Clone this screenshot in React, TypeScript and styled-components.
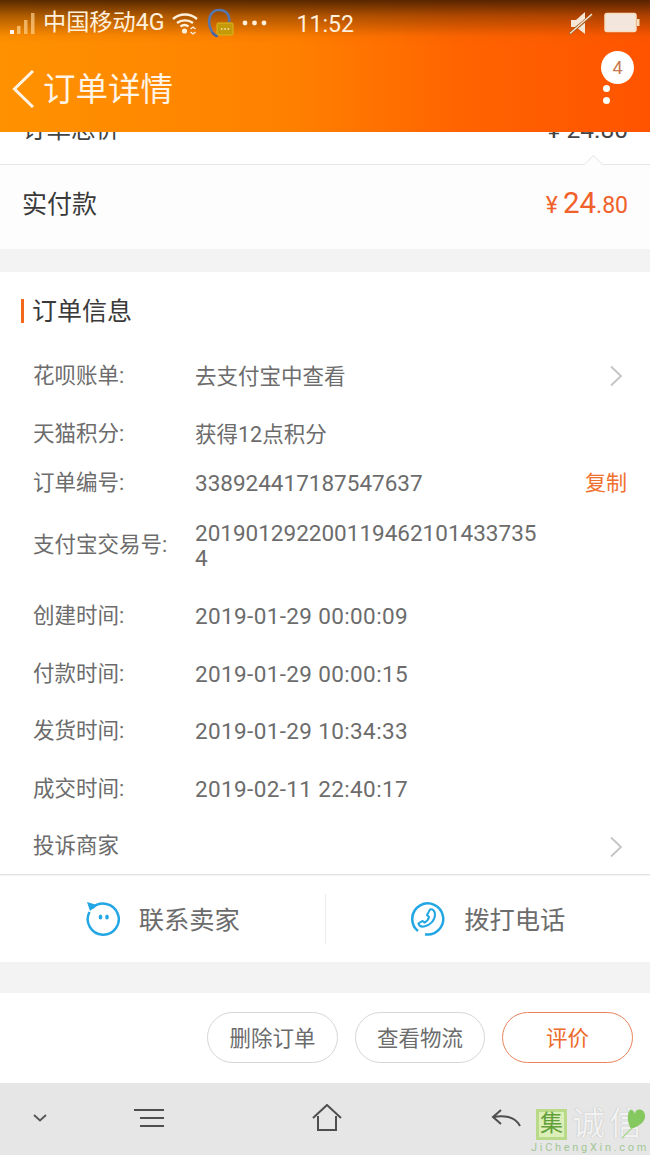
import React from "react";
import styled, { createGlobalStyle } from "styled-components";

const Global = createGlobalStyle`
  html, body { margin: 0; padding: 0; background: #f3f3f3; }
  body { font-family: Roboto, "Noto Sans CJK SC", sans-serif; }
  * { box-sizing: border-box; }
`;

const Page = styled.div`
  width: 650px;
  height: 1155px;
  position: relative;
  overflow: hidden;
  display: flex;
  flex-direction: column;
  background: #f3f3f3;
`;

const Header = styled.header`
  height: 132px;
  flex: none;
  color: #fff2e0;
  background:
    linear-gradient(180deg, rgba(70, 30, 0, 0.9) 0, rgba(110, 50, 0, 0.55) 16px, rgba(200, 90, 0, 0.12) 36px, rgba(255, 120, 0, 0) 44px),
    linear-gradient(90deg, #ff9200 0, #ff8000 45%, #ff6400 70%, #ff5300 100%);
  display: flex;
  flex-direction: column;
`;

const StatusBar = styled.div`
  height: 44px;
  display: flex;
  align-items: center;
  padding: 2px 10px 0 10px;
  font-size: 23.2px;
  line-height: 26px;
  color: #fff0dc;
`;

const Carrier = styled.span`
  margin-left: 5px;
  position: relative;
  top: -1px;
`;

const Clock = styled.span`
  margin-left: 29px;
  font-size: 23px;
  position: relative;
  top: 2px;
`;

const Spacer = styled.div`
  flex: 1;
`;

const NavBar = styled.div`
  height: 88px;
  display: flex;
  align-items: center;
  padding: 1px 17px 0 12px;
  position: relative;
  color: #fff4e6;
`;

const Title = styled.h1`
  margin: 3px 0 0 9px;
  font-size: 32.5px;
  line-height: 40px;
  font-weight: 400;
`;

const Badge = styled.span`
  position: absolute;
  top: 7px;
  right: 16px;
  width: 33px;
  height: 33px;
  border-radius: 50%;
  background: #fff;
  color: #c97a50;
  font-size: 18px;
  display: flex;
  align-items: center;
  justify-content: center;
`;

const Dots = styled.div`
  position: absolute;
  top: 41px;
  right: 40px;
  display: flex;
  flex-direction: column;
  gap: 5px;
`;

const Dot = styled.span`
  width: 7px;
  height: 7px;
  border-radius: 50%;
  background: #fff;
`;

const TotalRow = styled.div`
  height: 32px;
  flex: none;
  background: #fff;
  overflow: hidden;
  display: flex;
  justify-content: space-between;
  padding: 0 22px;
  font-size: 24.5px;
  line-height: 24px;
  color: #444;
`;

const ClippedText = styled.span`
  margin-top: -14px;
`;

const PaidRow = styled.div`
  height: 85px;
  flex: none;
  position: relative;
  background: #fdfdfd;
  border-top: 1px solid #e6e6e6;
  display: flex;
  align-items: center;
  justify-content: space-between;
  padding: 0 22px 5px;
`;

const Caret = styled.span`
  position: absolute;
  top: -9px;
  right: 48px;
  width: 17px;
  height: 17px;
  transform: rotate(45deg) scale(0.8, 0.8);
  background: #fdfdfd;
  border-left: 1px solid #e4e4e4;
  border-top: 1px solid #e4e4e4;
`;

const PaidLabel = styled.span`
  font-size: 25px;
  line-height: 28px;
  color: #3a3a3a;
`;

const Price = styled.span`
  color: #f0602a;
  font-size: 23px;
  line-height: 34px;
  display: flex;
  align-items: baseline;
`;

const PriceBig = styled.span`
  font-size: 29.5px;
  margin-left: 5px;
`;

const Card = styled.section`
  margin-top: 23px;
  height: 603px;
  flex: none;
  background: #fff;
  border-bottom: 1px solid #e2e2e2;
`;

const CardTitle = styled.h2`
  margin: 0 0 0 21px;
  height: 78px;
  display: flex;
  align-items: center;
  font-size: 25px;
  line-height: 28px;
  font-weight: 400;
  color: #3a3a3a;

  &::before {
    content: "";
    width: 3px;
    height: 24px;
    background: #f4681e;
    margin-right: 8px;
  }
`;

const CardTitleText = styled.span`
  padding-top: 2px;
`;

const RowList = styled.div`
  margin-top: -3px;
`;

const InfoRow = styled.div<{ $h: number }>`
  height: ${(p) => p.$h}px;
  display: flex;
  align-items: center;
  padding-left: 33px;
  font-size: 21.5px;
  line-height: 25px;
  color: #6c6c6c;
  position: relative;
`;

const Label = styled.span`
  width: 162px;
  flex: none;
  white-space: nowrap;
  padding-bottom: 2px;
`;

const Value = styled.span<{ $numeric?: boolean; $spacing?: number }>`
  width: 344px;
  font-size: ${(p) => (p.$numeric ? "22.5px" : "21.5px")};
  letter-spacing: ${(p) => p.$spacing ?? 0}px;
  line-height: 25px;
  word-break: break-all;
  color: #6c6c6c;
`;

const Copy = styled.span`
  position: absolute;
  right: 23px;
  color: #f0702e;
  font-size: 21px;
`;

const Chevron = styled.svg`
  position: absolute;
  right: 27px;
  width: 14px;
  height: 22px;
`;

const Contact = styled.div`
  margin-top: 1px;
  height: 86px;
  flex: none;
  background: #fff;
  display: flex;
  align-items: center;
`;

const ContactItem = styled.div<{ $divider?: boolean }>`
  flex: 1;
  height: 50px;
  display: flex;
  align-items: center;
  justify-content: center;
  gap: 19px;
  padding-left: 1px;
  font-size: 25.3px;
  line-height: 28px;
  color: #6c6c6c;
  border-left: ${(p) => (p.$divider ? "1px solid #ececec" : "0")};
`;

const ContactLabel = styled.span`
  padding-top: 4px;
`;

const Actions = styled.div`
  margin-top: 31px;
  height: 90px;
  flex: none;
  background: #fff;
  display: flex;
  align-items: center;
  justify-content: flex-end;
  gap: 17px;
  padding: 0 17px 2px 0;
`;

const ActionButton = styled.button<{ $primary?: boolean; $w: number }>`
  width: ${(p) => p.$w}px;
  height: 51px;
  border-radius: 26px;
  background: #fff;
  font-family: inherit;
  font-size: 21.5px;
  line-height: 25px;
  padding: 3px 0 0;
  color: ${(p) => (p.$primary ? "#ee6a28" : "#6c6c6c")};
  border: 1px solid ${(p) => (p.$primary ? "#e8845a" : "#d6d6d6")};
`;

const BottomNav = styled.nav`
  flex: 1;
  background: #e6e6e6;
  position: relative;
  display: flex;
  align-items: center;
  padding-bottom: 2px;
`;

const NavSlot = styled.div<{ $w: number }>`
  width: ${(p) => p.$w}px;
  flex: none;
  display: flex;
  justify-content: center;
`;

const Watermark = styled.div`
  position: absolute;
  right: 0;
  bottom: 0;
  width: 120px;
  height: 47px;
  padding-left: 6px;
`;

const MarkRow = styled.div`
  display: flex;
  align-items: center;
  height: 32px;
`;

const MarkBox = styled.span`
  width: 31px;
  height: 31px;
  margin-right: 5px;
  flex: none;
  background: #dcefb8;
  border: 3px solid #b9da88;
  color: #63a03c;
  font-size: 23px;
  line-height: 24px;
  text-align: center;
`;

const MarkText = styled.span`
  display: block;
  height: 32px;
  font-size: 33px;
  line-height: 32px;
  letter-spacing: 4px;
  color: #f2f2f2;
  text-shadow: 0 0 1px #a8a8a8;
  white-space: nowrap;
`;

const MarkUrl = styled.div`
  font-size: 11px;
  line-height: 12px;
  letter-spacing: 2.7px;
  color: #a3c796;
  margin: 2px 0 0 -5px;
  white-space: nowrap;
`;

const Heart = styled.svg`
  position: absolute;
  right: 0;
  top: 0;
  width: 34px;
  height: 34px;
`;

const RightChevron = () => (
  <Chevron viewBox="0 0 14 22" fill="none" stroke="#c4c4c4" strokeWidth="1.8">
    <path d="M2 1.5 12 11 2 20.5" />
  </Chevron>
);

const rows: { h: number; label: string; value?: string; numeric?: boolean; spacing?: number; copy?: boolean; chev?: boolean }[] = [
  { h: 58, label: "花呗账单:", value: "去支付宝中查看", chev: true },
  { h: 58, label: "天猫积分:", value: "获得12点积分" },
  { h: 41, label: "订单编号:", value: "338924417187547637", numeric: true, copy: true },
  { h: 83, label: "支付宝交易号:", value: "2019012922001194621014337354", numeric: true },
  { h: 58, label: "创建时间:", value: "2019-01-29 00:00:09", numeric: true, spacing: 0.37 },
  { h: 58, label: "付款时间:", value: "2019-01-29 00:00:15", numeric: true, spacing: 0.37 },
  { h: 57, label: "发货时间:", value: "2019-01-29 10:34:33", numeric: true, spacing: 0.37 },
  { h: 58, label: "成交时间:", value: "2019-02-11 22:40:17", numeric: true, spacing: 0.37 },
  { h: 57, label: "投诉商家", chev: true },
];

export default function App() {
  return (
    <Page>
      <Global />
      <Header>
        <StatusBar>
          <svg width="28" height="24" viewBox="0 0 28 24">
            <rect x="0" y="19" width="4" height="4" fill="#fff6e8" />
            <rect x="7" y="15" width="3.5" height="8" fill="#ffd08a" opacity="0.75" />
            <rect x="14" y="9" width="3.5" height="14" fill="#ffd08a" opacity="0.7" />
            <rect x="21" y="2" width="3.5" height="21" fill="#ffd08a" opacity="0.7" />
          </svg>
          <Carrier>中国移动4G</Carrier>
          <svg width="28" height="24" viewBox="0 0 28 24" fill="none" stroke="#fff0dc" strokeWidth="2.4" style={{ marginLeft: 6 }}>
            <path d="M2 8c7-6 17-6 24 0M6 12c4.500-3.500 11.500-3.500 16 0M9.500 15.500c2.500-1.800 5.500-1.800 8 0" />
            <circle cx="13.500" cy="20" r="2.600" fill="#fff0dc" stroke="none" />
            <path d="M19.500 18l2.500-2 2.500 2M19.500 21l2.500 2 2.500-2" strokeWidth="1.300" />
          </svg>
          <svg width="28" height="32" viewBox="0 0 28 32" fill="none" style={{ marginLeft: 8 }}>
            <path d="M5 25C-1 14 3 3 12 3s11 7 10 12" stroke="#5577b0" strokeWidth="2.600" />
            <path d="M5 25c2 3 4 4 6 4" stroke="#4466a8" strokeWidth="2.600" />
            <rect x="10" y="16" width="16" height="12" rx="1" fill="#c49a08" stroke="#d8b820" />
            <path d="M14 22h1.500M17.300 22h1.500M20.600 22h1.500" stroke="#fff0c0" strokeWidth="1.500" />
          </svg>
          <svg width="26" height="8" viewBox="0 0 26 8" fill="#fff0dc" style={{ marginLeft: 7 }}>
            <circle cx="3" cy="4" r="2.400" />
            <circle cx="12.500" cy="4" r="2.400" />
            <circle cx="22" cy="4" r="2.400" />
          </svg>
          <Clock>11:52</Clock>
          <Spacer />
          <svg width="24" height="24" viewBox="0 0 24 24" style={{ marginRight: 11 }}>
            <path d="M2 9h5l9-8v22l-9-7H2z" fill="#f6e6d6" />
            <path d="M0 23 23 4" stroke="#a85a18" strokeWidth="3" />
            <path d="M1 22.500 23 3" stroke="#f6e6d6" strokeWidth="1.300" />
          </svg>
          <svg width="36" height="22" viewBox="0 0 36 22">
            <rect x="1" y="1.500" width="31" height="18" rx="2" fill="#f3e6dc" stroke="#f8ddc0" strokeWidth="1.500" />
            <rect x="33" y="7" width="2.500" height="7" fill="#f8ddc0" />
          </svg>
        </StatusBar>
        <NavBar>
          <svg width="22" height="38" viewBox="0 0 22 38" fill="none" stroke="#fff4e6" strokeWidth="3">
            <path d="M21 1 2.500 19 21 37" />
          </svg>
          <Title>订单详情</Title>
          <Badge>4</Badge>
          <Dots>
            <Dot />
            <Dot />
          </Dots>
        </NavBar>
      </Header>
      <TotalRow>
        <ClippedText>订单总价</ClippedText>
        <ClippedText>¥ 24.80</ClippedText>
      </TotalRow>
      <PaidRow>
        <Caret />
        <PaidLabel>实付款</PaidLabel>
        <Price>
          ¥<PriceBig>24</PriceBig>.80
        </Price>
      </PaidRow>
      <Card>
        <CardTitle>
          <CardTitleText>订单信息</CardTitleText>
        </CardTitle>
        <RowList>
          {rows.map((r) => (
            <InfoRow key={r.label} $h={r.h}>
              <Label>{r.label}</Label>
              {r.value && (
                <Value $numeric={r.numeric} $spacing={r.spacing}>
                  {r.value}
                </Value>
              )}
              {r.copy && <Copy>复制</Copy>}
              {r.chev && <RightChevron />}
            </InfoRow>
          ))}
        </RowList>
      </Card>
      <Contact>
        <ContactItem>
          <svg width="34" height="34" viewBox="0 0 34 34" fill="none">
            <path d="M6 6.500A15.500 15.500 0 1 1 3.500 10" stroke="#22a6e4" strokeWidth="2.500" />
            <path d="M1 0l10 3-7 6z" fill="#22a6e4" />
            <ellipse cx="14.500" cy="15" rx="1.800" ry="2.600" fill="#22a6e4" />
            <ellipse cx="21" cy="15" rx="1.800" ry="2.600" fill="#22a6e4" />
          </svg>
          <ContactLabel>联系卖家</ContactLabel>
        </ContactItem>
        <ContactItem $divider>
          <svg width="34" height="34" viewBox="0 0 34 34" fill="none" stroke="#22a6e4" strokeWidth="2.500">
            <path d="M7 29A15.500 15.500 0 1 1 14 32.200" />
            <path d="M19 7.500c3-1 5 2 5 5 0 6-5 11-11 12-3 .5-5-1-5.500-3l4-2.500 2 1.500c2-1 4-3 4.500-5.500l-2-2z" strokeWidth="2" />
          </svg>
          <ContactLabel>拨打电话</ContactLabel>
        </ContactItem>
      </Contact>
      <Actions>
        <ActionButton $w={131}>删除订单</ActionButton>
        <ActionButton $w={130}>查看物流</ActionButton>
        <ActionButton $w={131} $primary>
          评价
        </ActionButton>
      </Actions>
      <BottomNav>
        <NavSlot $w={80}>
          <svg width="14" height="8" viewBox="0 0 14 8" fill="none" stroke="#555" strokeWidth="1.800">
            <path d="M1 1l6 5.500L13 1" />
          </svg>
        </NavSlot>
        <NavSlot $w={138}>
          <svg width="30" height="20" viewBox="0 0 30 20" stroke="#4e4e4e" strokeWidth="2">
            <path d="M0 2h30M6 10h24M6 18h24" />
          </svg>
        </NavSlot>
        <NavSlot $w={218}>
          <svg width="30" height="28" viewBox="0 0 30 28" fill="none" stroke="#4e4e4e" strokeWidth="2">
            <path d="M1 14 15 1l14 13M6 12v14h18V12" />
          </svg>
        </NavSlot>
        <NavSlot $w={140}>
          <svg width="30" height="20" viewBox="0 0 30 20" fill="none" stroke="#4e4e4e" strokeWidth="2">
            <path d="M10 2 2 9l8 7M2 9c10-2 22-1 27 9" />
          </svg>
        </NavSlot>
        <Watermark>
          <MarkRow>
            <MarkBox>集</MarkBox>
            <MarkText>诚信</MarkText>
          </MarkRow>
          <MarkUrl>JiChengXin.com</MarkUrl>
          <Heart viewBox="0 0 34 34">
            <path d="M19 6C19 0 28 0 29 7c1 6-5 11-14 14C11 14 11 5 14 2c2-1 4 1 5 4z" fill="#86c860" />
            <path d="M6 30 16 20" stroke="#a6d88a" strokeWidth="1.200" />
          </Heart>
        </Watermark>
      </BottomNav>
    </Page>
  );
}
